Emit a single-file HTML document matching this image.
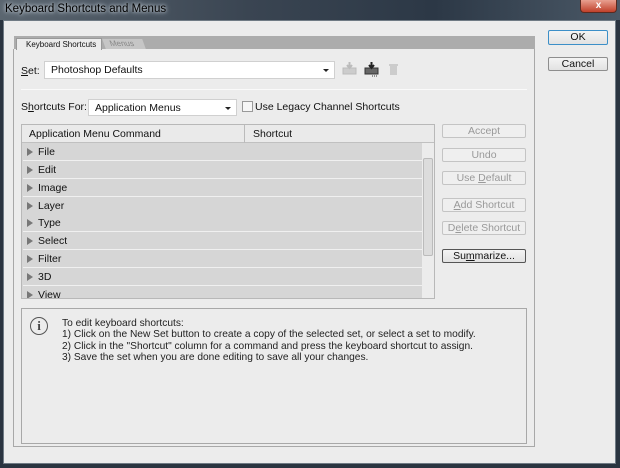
<!DOCTYPE html>
<html><head><style>
*{margin:0;padding:0;box-sizing:border-box}
body{width:620px;height:468px;overflow:hidden;background:#2a3440;font-family:"Liberation Sans",sans-serif;font-size:10.5px;color:#111;position:relative}
.abs{position:absolute}
.title{left:0;top:0;width:620px;height:20px;background:linear-gradient(90deg,#5b6670,#3a4552 40%,#2c3846 70%,#4a5866);}
.title span{position:absolute;left:5px;top:3px;color:#000;font-size:11.5px;text-shadow:0 0 6px #cfd8e0,0 0 3px #cfd8e0}
.close{left:580px;top:0;width:37px;height:13px;background:linear-gradient(#e8a090,#c0402a);border:1px solid #5a2a20;border-top:none;border-radius:0 0 4px 4px;color:#fff;font-weight:bold;text-align:center;font-size:10px;line-height:12px}
.win{left:3px;top:20px;width:613px;height:444px;background:#ececec;border:1px solid #6f7a84}
.btn{background:linear-gradient(#f4f4f4,#e2e2e2);border:1px solid #8e8e8e;border-radius:2px;text-align:center;font-size:10.5px;line-height:12px}
.dis{color:#999;border-color:#c4c4c4;background:#efefef}
.dd{background:#fff;border:1px solid #d0d0d0;padding-left:6px;line-height:16px}
.arr{position:absolute;right:5px;top:7px;border-left:3px solid transparent;border-right:3px solid transparent;border-top:3px solid #222}
.row{position:absolute;left:1px;width:399px;height:18px;background:#d6d6d6;border-bottom:1px solid #f0f0f0;line-height:19px;padding-left:4px;font-size:10.5px}
.row i{display:inline-block;width:0;height:0;border-top:4px solid transparent;border-bottom:4px solid transparent;border-left:6px solid #777;margin-right:5px;vertical-align:-1px}
</style></head><body>
<div class="abs title"><span>Keyboard Shortcuts and Menus</span></div>
<div class="abs close">x</div>
<div class="abs win"></div>
<div class="abs" style="left:14px;top:36px;width:521px;height:13px;background:#acacac"></div>
<div class="abs" style="left:16px;top:38px;width:86px;height:12px;background:#ececec;border:1px solid #999;border-bottom:none;font-size:8px;line-height:11px;padding-left:9px">Keyboard Shortcuts</div>
<div class="abs" style="left:104px;top:39px;width:40px;height:10px;background:#c6c6c6;font-size:8px;line-height:10px;padding-left:6px;color:#888;transform:skewX(20deg)">Menus</div>
<div class="abs" style="left:13px;top:49px;width:522px;height:398px;border:1px solid #a8a8a8;border-top:none"></div>
<div class="abs" style="left:21px;top:65px"><u>S</u>et:</div>
<div class="abs dd" style="left:44px;top:61px;width:291px;height:18px;line-height:17px">Photoshop Defaults<div class="arr"></div></div>
<svg class="abs" style="left:340px;top:60px" width="60" height="20">
<rect x="3" y="8" width="13" height="6" fill="#ccc" stroke="#bbb"/><path d="M9.5 2v6M7 5l2.5 3 2.5-3" stroke="#bbb" fill="none" stroke-width="2"/>
<rect x="25" y="8" width="13" height="6" fill="#666" stroke="#333"/><path d="M31.5 2v6M29 5l2.5 3 2.5-3" stroke="#222" fill="none" stroke-width="2"/><path d="M32 16h6" stroke="#333" stroke-dasharray="1 1"/>
<rect x="50" y="6" width="7" height="9" fill="#ccc"/><rect x="49" y="4" width="9" height="2" fill="#ccc"/>
</svg>
<div class="abs" style="left:21px;top:89px;width:506px;height:1px;background:#c4c4c4;border-bottom:1px solid #fafafa"></div>
<div class="abs" style="left:21px;top:101px">S<u>h</u>ortcuts For:</div>
<div class="abs dd" style="left:88px;top:99px;width:149px;height:17px">Application Menus<div class="arr"></div></div>
<div class="abs" style="left:242px;top:101px;width:11px;height:11px;border:1px solid #999;background:#f6f6f6"></div>
<div class="abs" style="left:255px;top:101px">Use Legacy Channel Shortcuts</div>
<div class="abs" style="left:21px;top:124px;width:414px;height:175px;border:1px solid #b8b8b8;background:#d6d6d6;overflow:hidden">
<div class="abs" style="left:0;top:0;width:412px;height:18px;background:#eaeaea;border-bottom:1px solid #c0c0c0;line-height:18px"><span style="position:absolute;left:7px">Application Menu Command</span><span style="position:absolute;left:222px;top:0;height:18px;border-left:1px solid #bbb;padding-left:8px">Shortcut</span></div>
<div class="row" style="top:18px"><i></i>File</div>
<div class="row" style="top:36px"><i></i>Edit</div>
<div class="row" style="top:54px"><i></i>Image</div>
<div class="row" style="top:72px"><i></i>Layer</div>
<div class="row" style="top:89px"><i></i>Type</div>
<div class="row" style="top:107px"><i></i>Select</div>
<div class="row" style="top:125px"><i></i>Filter</div>
<div class="row" style="top:143px"><i></i>3D</div>
<div class="row" style="top:161px"><i></i>View</div>
<div class="abs" style="left:400px;top:18px;width:12px;height:156px;background:#ececec"></div>
<div class="abs" style="left:401px;top:33px;width:10px;height:98px;background:#dcdcdc;border:1px solid #bbb;border-radius:2px"></div>
</div>
<div class="abs btn dis" style="left:442px;top:124px;width:84px;height:14px">Accept</div>
<div class="abs btn dis" style="left:442px;top:148px;width:84px;height:14px">Undo</div>
<div class="abs btn dis" style="left:442px;top:171px;width:84px;height:14px">Use <u>D</u>efault</div>
<div class="abs btn dis" style="left:442px;top:198px;width:84px;height:14px"><u>A</u>dd Shortcut</div>
<div class="abs btn dis" style="left:442px;top:221px;width:84px;height:14px">D<u>e</u>lete Shortcut</div>
<div class="abs btn" style="left:442px;top:249px;width:84px;height:14px;border-color:#555">Su<u>m</u>marize...</div>
<div class="abs btn" style="left:548px;top:30px;width:60px;height:15px;border-color:#3c8fc8;line-height:13px">OK</div>
<div class="abs btn" style="left:548px;top:57px;width:60px;height:14px">Cancel</div>
<div class="abs" style="left:21px;top:308px;width:506px;height:136px;border:1px solid #a8a8a8;background:#ececec"></div>
<div class="abs" style="left:30px;top:317px;width:18px;height:18px;border:1.5px solid #555;border-radius:50%;text-align:center;font-family:'Liberation Serif',serif;font-weight:bold;font-size:13px;line-height:15px;color:#444">i</div>
<div class="abs" style="left:62px;top:318px;line-height:11.3px;font-size:10.2px;color:#222">To edit keyboard shortcuts:<br>1) Click on the New Set button to create a copy of the selected set, or select a set to modify.<br>2) Click in the "Shortcut" column for a command and press the keyboard shortcut to assign.<br>3) Save the set when you are done editing to save all your changes.</div>
</body></html>
